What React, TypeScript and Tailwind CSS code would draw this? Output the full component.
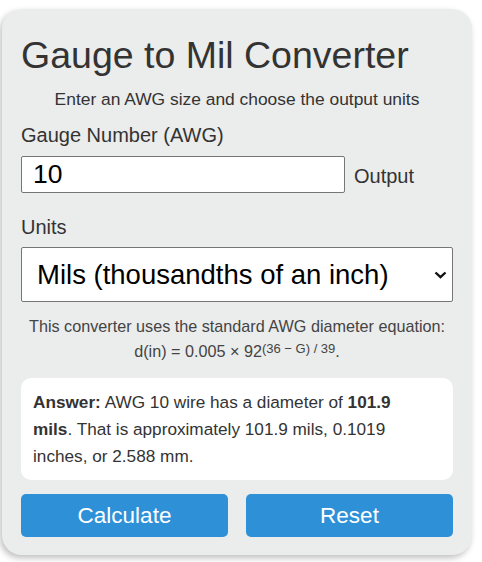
import React from "react";

export default function App() {
  return (
    <div className="w-[482px] h-[562px] bg-white overflow-hidden pt-[9px] pl-[2px]" style={{ fontFamily: '"Liberation Sans", Arial, sans-serif' }}>
      <div className="w-[470px] rounded-[20px] bg-[#ebecec] shadow-[-2px_3px_6px_rgba(0,0,0,0.25)] px-[19px] pt-[25px] pb-[18px] text-[#333]">
        <h1 className="text-[37.5px] leading-[42px] m-0 font-normal text-[#333]">Gauge to Mil Converter</h1>
        <p className="text-center text-[17.4px] leading-[20px] mt-[13px] text-[#333]">Enter an AWG size and choose the output units</p>
        <div className="mt-[15px] text-[20px] leading-[23px]">Gauge Number (AWG)</div>
        <div className="flex items-center mt-[9px]">
          <input
            readOnly
            value="10"
            className="w-[324px] h-[37px] bg-white border border-[#767676] rounded-[2px] pl-[11px] text-[26.5px] text-black outline-none"
            style={{ fontFamily: '"Liberation Sans", Arial, sans-serif' }}
          />
          <span className="ml-[9px] text-[20px] leading-[23px] mt-[4px]">Output</span>
        </div>
        <div className="mt-[23px] text-[20px] leading-[23px]">Units</div>
        <div className="mt-[8px] relative w-[432px] h-[55px] bg-white border border-[#767676] rounded-[2px] flex items-center">
          <span className="pl-[15px] text-[27.5px] leading-[32px] text-black">Mils (thousandths of an inch)</span>
          <svg className="absolute right-[5px] top-[23px]" width="13" height="8" viewBox="0 0 13 8">
            <path d="M1.5 1.5 L6.5 6.2 L11.5 1.5" fill="none" stroke="#111" strokeWidth="2.4" />
          </svg>
        </div>
        <div className="mt-[12px] text-center text-[16.2px] leading-[25px] text-[#444]">
          <div>This converter uses the standard AWG diameter equation:</div>
          <div>
            d(in) = 0.005 × 92<sup className="text-[13px] top-[-0.3em]">(36 − G) / 39</sup>.
          </div>
        </div>
        <div className="mt-[14px] bg-white rounded-[10px] pl-[12px] pr-[24px] pt-[10.5px] pb-[10.5px] text-[17.2px] leading-[27px] text-[#333]">
          <b>Answer:</b> AWG 10 wire has a diameter of <b>101.9 mils</b>. That is approximately 101.9 mils, 0.1019 inches, or 2.588 mm.
        </div>
        <div className="mt-[14px] grid grid-cols-2 gap-[18px]">
          <button className="h-[43px] rounded-[5px] bg-[#2e91d8] text-white text-[22.5px]">Calculate</button>
          <button className="h-[43px] rounded-[5px] bg-[#2e91d8] text-white text-[22.5px]">Reset</button>
        </div>
      </div>
    </div>
  );
}
